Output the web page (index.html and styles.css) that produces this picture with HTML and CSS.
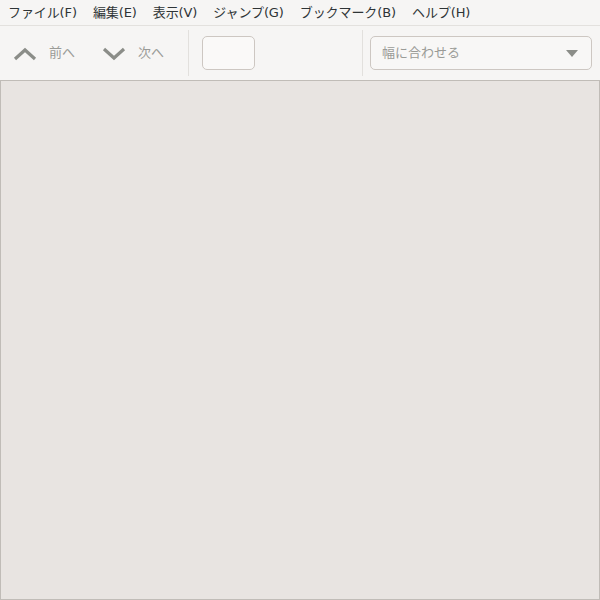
FILE: index.html
```html
<!DOCTYPE html>
<html lang="ja">
<head>
<meta charset="utf-8">
<link rel="stylesheet" href="styles.css">
</head>
<body>
<div class="window">
  <nav class="menubar">
    <span class="menu">ファイル(F)</span>
    <span class="menu">編集(E)</span>
    <span class="menu">表示(V)</span>
    <span class="menu">ジャンプ(G)</span>
    <span class="menu">ブックマーク(B)</span>
    <span class="menu">ヘルプ(H)</span>
  </nav>
  <div class="toolbar">
    <div class="navbtn prev">
      <svg class="chev" width="24" height="14" viewBox="0 0 24 14"><path d="M2 12 L12 3 L22 12" fill="none" stroke="#8b8d88" stroke-width="3.2" stroke-linejoin="miter"/></svg>
      <span class="navlabel">前へ</span>
    </div>
    <div class="navbtn next">
      <svg class="chev" width="24" height="14" viewBox="0 0 24 14"><path d="M2 2 L12 11 L22 2" fill="none" stroke="#8b8d88" stroke-width="3.2" stroke-linejoin="miter"/></svg>
      <span class="navlabel">次へ</span>
    </div>
    <div class="sep sep1"></div>
    <div class="pagebox"></div>
    <div class="spacer"></div>
    <div class="sep"></div>
    <div class="combo">
      <span class="combotext">幅に合わせる</span>
      <svg class="caret" width="12" height="7" viewBox="0 0 12 7"><path d="M0 0 L12 0 L6 7 Z" fill="#8b8d88"/></svg>
    </div>
  </div>
  <div class="content"></div>
</div>
</body>
</html>
```
FILE: styles.css
```css
* { box-sizing: border-box; }
html, body { margin: 0; padding: 0; }
body {
  width: 600px;
  height: 600px;
  overflow: hidden;
  font-family: "DejaVu Sans", "Noto Sans CJK JP", sans-serif;
  font-size: 13px;
  background: #f6f5f4;
}
.window {
  display: flex;
  flex-direction: column;
  height: 600px;
}
.menubar {
  height: 26px;
  display: flex;
  align-items: center;
  padding: 0 0 1px 8px;
  gap: 16px;
  color: #2e3436;
  background: #f6f5f4;
  border-bottom: 1px solid #e3e1de;
  line-height: 1;
}
.menu { letter-spacing: -0.1px; }
.toolbar {
  height: 54px;
  display: flex;
  align-items: center;
  background: #f6f5f4;
  padding: 0 8px 0 13px;
}
.navbtn {
  display: flex;
  align-items: center;
  gap: 12px;
  color: #9a9b97;
  padding-top: 1px;
}
.next { margin-left: 27px; }
.navlabel { font-size: 13px; line-height: 1; margin-top: -2px; }
.sep {
  width: 1px;
  height: 46px;
  background: #e2e0dd;
}
.sep1 { margin-left: 24px; }
.pagebox {
  margin-left: 13px;
  width: 53px;
  height: 34px;
  background: #faf9f8;
  border: 1px solid #cdc7c2;
  border-radius: 5px;
}
.spacer { flex: 1; }
.combo {
  margin-left: 7px;
  width: 222px;
  height: 34px;
  display: flex;
  align-items: center;
  justify-content: space-between;
  padding: 0 13px 0 11px;
  background: #f8f7f6;
  border: 1px solid #cdc7c2;
  border-radius: 5px;
  color: #9a9b97;
}
.combotext { font-size: 13px; line-height: 1; margin-top: -2px; }
.caret { display: block; }
.content {
  flex: 1;
  background: #e8e4e1;
  border: 1px solid #c0bcb7;
}
```
